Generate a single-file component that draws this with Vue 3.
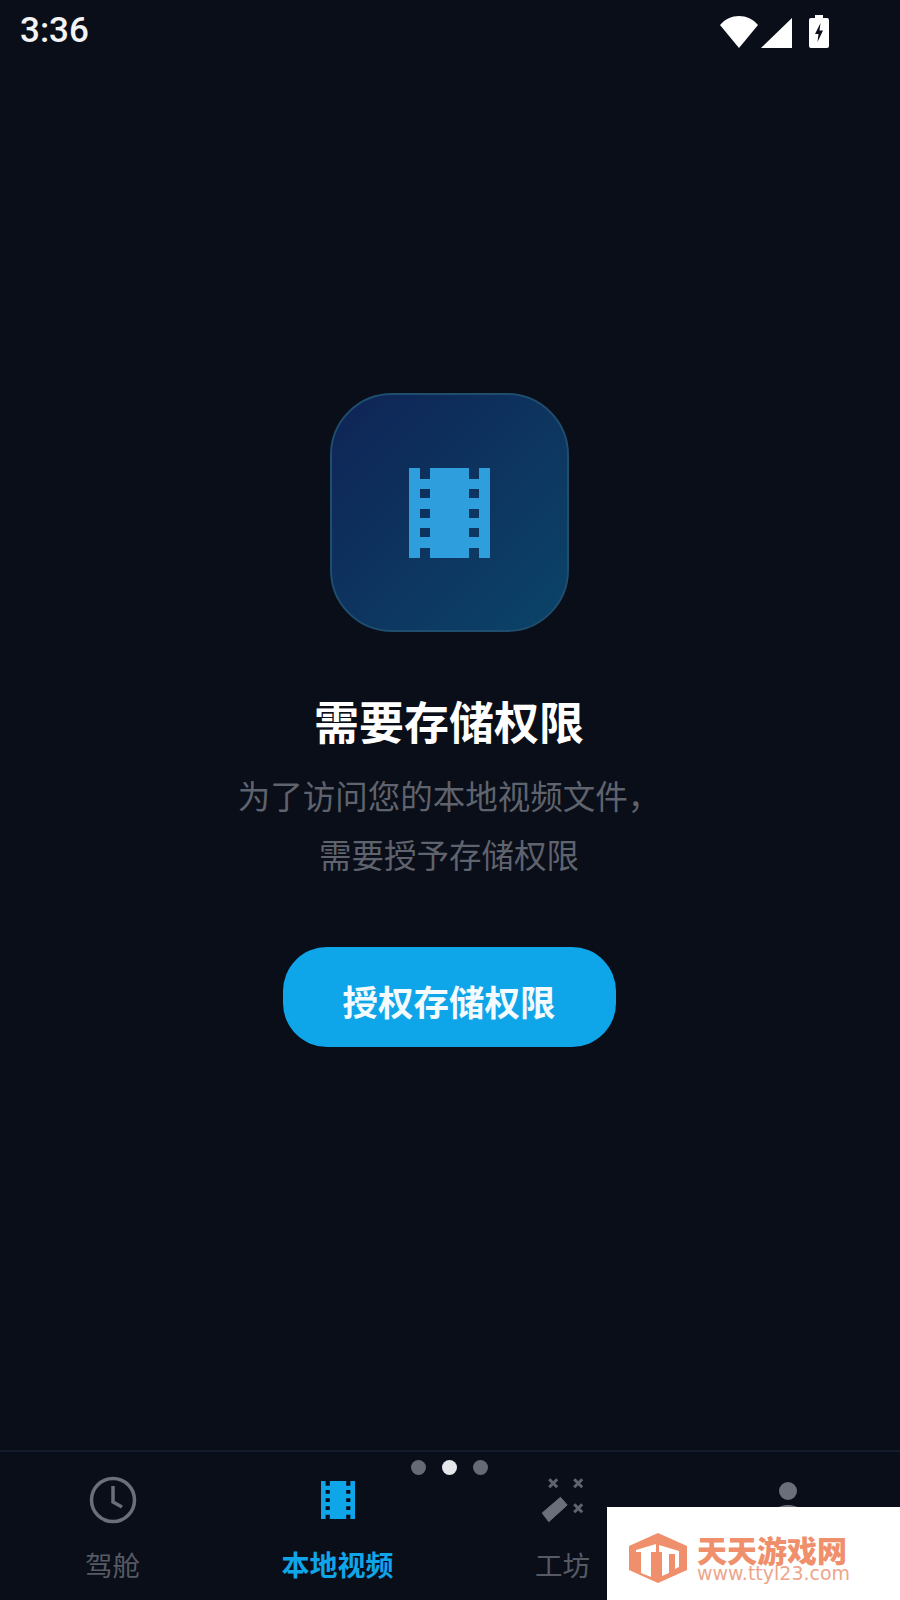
<template>
  <div class="screen">
    <!-- status bar -->
    <div class="status-bar">
      <span class="status-time">3:36</span>
      <div class="status-icons">
        <svg width="38" height="32" viewBox="0 0 38 32"><path d="M0 9C5 3 12 0 19 0s14 3 19 9L19 32Z" fill="#fff" /></svg>
        <svg width="31" height="30" viewBox="0 0 31 30"><path d="M31 0V30H0Z" fill="#fff" /></svg>
        <svg width="20" height="33" viewBox="0 0 20 33"><path fill-rule="evenodd" d="M6 0H14V3H18Q20 3 20 5V31Q20 33 18 33H2Q0 33 0 31V5Q0 3 2 3H6ZM11.5 8L6 19H9.5L8.5 27L14 15.5H10.500Z" fill="#fff" /></svg>
      </div>
    </div>

    <!-- permission prompt -->
    <div class="prompt">
      <div class="prompt-tile">
        <svg width="81" height="90" viewBox="0 0 81 90"><path :d="filmPath" fill-rule="evenodd" fill="#2e9fdc" /></svg>
      </div>
      <div class="prompt-title">需要存储权限</div>
      <div class="prompt-desc">为了访问您的本地视频文件，<br />需要授予存储权限</div>
      <button class="prompt-btn">授权存储权限</button>
    </div>

    <!-- bottom tabs -->
    <div class="tab-bar">
      <div class="page-dots">
        <span class="dot"></span>
        <span class="dot active"></span>
        <span class="dot"></span>
      </div>
      <div class="tab">
        <div class="tab-icon">
          <svg width="48" height="48" viewBox="0 0 48 48" fill="none" stroke="#6b6f7a" stroke-width="3.500">
            <circle cx="24" cy="24" r="21.500" />
            <path d="M24 10V26L33 31" />
          </svg>
        </div>
        <span>驾舱</span>
      </div>
      <div class="tab active">
        <div class="tab-icon">
          <svg width="34" height="38" viewBox="0 0 81 90"><path :d="filmPath" fill-rule="evenodd" fill="#0ea5e9" /></svg>
        </div>
        <span>本地视频</span>
      </div>
      <div class="tab">
        <div class="tab-icon">
          <svg width="48" height="48" viewBox="0 0 48 48" fill="#6b6f7a">
            <path d="M3.200 37L21.500 21.300L28.200 29L9.800 45.700Z" stroke="#6b6f7a" stroke-width="1" stroke-linejoin="round" />
            <path d="M10.200 3.300L18.200 11.300M18.200 3.300L10.200 11.300M35.200 3.300L43.200 11.300M43.200 3.300L35.200 11.300M35.200 28.300L43.200 36.300M43.200 28.300L35.200 36.300" fill="none" stroke="#5f636d" stroke-width="3" />
          </svg>
        </div>
        <span>工坊</span>
      </div>
      <div class="tab">
        <div class="tab-icon">
          <svg width="44" height="50" viewBox="0 0 44 50" fill="#6b6f7a">
            <circle cx="22" cy="16" r="9" />
            <path d="M2 48C2 36 12 30 22 30s20 6 20 18Z" />
          </svg>
        </div>
      </div>
    </div>

    <!-- site watermark -->
    <div class="watermark">
      <svg width="58" height="50" viewBox="0 0 58 50">
        <path d="M29 0L58 13V37L29 50L0 37V13Z" fill="#ef8f6c" />
        <path d="M7 17L27 11V19H22V44L12 40V19H7ZM30 12L50 18V34L46 36V21H40V40L33 43V19H30Z" fill="#fff" />
      </svg>
      <div class="watermark-text">
        <div class="watermark-name">天天游戏网</div>
        <div class="watermark-url">www.ttyl23.com</div>
      </div>
    </div>
  </div>
</template>

<script setup>
const filmPath =
  'M0 0H11V11H21V0H60V11H70V0H81V90H70V80H60V90H21V80H11V90H0Z' +
  'M11 21H21V30H11ZM11 41H21V50H11ZM11 60H21V69H11Z' +
  'M60 21H70V30H60ZM60 41H70V50H60ZM60 60H70V69H60Z'
</script>

<style>
html,
body {
  background: #0a0e18;
}
</style>

<style scoped>
.screen {
  position: relative;
  width: 900px;
  height: 1600px;
  overflow: hidden;
  display: flex;
  flex-direction: column;
  background: #0a0e18;
  font-family: "Noto Sans CJK SC", "Noto Sans", sans-serif;
}
.status-bar {
  height: 62px;
  flex: none;
  display: flex;
  justify-content: space-between;
  align-items: flex-start;
  padding: 9px 71px 0 20px;
  box-sizing: border-box;
}
.status-time {
  font-family: Roboto, sans-serif;
  font-size: 35px;
  font-weight: 500;
  line-height: 44px;
  color: #f2f3f5;
}
.status-icons {
  display: flex;
  align-items: flex-end;
  gap: 3px;
  height: 36px;
  padding-top: 3px;
  box-sizing: content-box;
}
.status-icons svg:last-child {
  margin-left: 14px;
}
.prompt {
  flex: 1;
  display: flex;
  flex-direction: column;
  align-items: center;
  padding: 331px 2px 0 0;
}
.prompt-tile {
  width: 239px;
  height: 239px;
  box-sizing: border-box;
  border-radius: 62px;
  border: 2px solid #1f4d6e;
  background: linear-gradient(135deg, #0f2456, #0b4468);
  display: flex;
  align-items: center;
  justify-content: center;
}
.prompt-title {
  margin-top: 61px;
  font-size: 45px;
  line-height: 56px;
  font-weight: 700;
  color: #fff;
}
.prompt-desc {
  margin-top: 16px;
  font-size: 32.500px;
  line-height: 59px;
  color: #5f636e;
  text-align: center;
}
.prompt-btn {
  margin-top: 64px;
  width: 333px;
  height: 100px;
  border: none;
  border-radius: 44px;
  background: #0ea5e9;
  color: #f4fbff;
  font-family: inherit;
  font-size: 35.500px;
  font-weight: 700;
  padding: 6px 0 0;
}
.tab-bar {
  position: relative;
  height: 150px;
  flex: none;
  box-sizing: border-box;
  border-top: 2px solid #141b2b;
  display: grid;
  grid-template-columns: repeat(4, 225px);
}
.page-dots {
  position: absolute;
  top: 8px;
  left: 411px;
  display: flex;
  gap: 16px;
}
.dot {
  width: 15px;
  height: 15px;
  border-radius: 50%;
  background: #666a75;
}
.dot.active {
  background: #e5e7eb;
}
.tab {
  display: flex;
  flex-direction: column;
  align-items: center;
  padding-top: 18px;
  font-size: 27.500px;
  line-height: 40px;
  color: #565a64;
}
.tab.active {
  color: #0ea5e9;
  font-size: 28px;
  font-weight: 700;
}
.tab-icon {
  height: 60px;
  margin-bottom: 14px;
  display: flex;
  align-items: center;
  justify-content: center;
}
.watermark {
  position: absolute;
  right: 0;
  bottom: 0;
  width: 293px;
  height: 93px;
  box-sizing: border-box;
  padding: 26px 0 0 22px;
  background: #fff;
  display: flex;
  gap: 10px;
}
.watermark-text {
  margin-top: 1px;
  color: #ef8f6c;
}
.watermark-name {
  font-size: 30px;
  line-height: 30px;
  font-weight: 900;
}
.watermark-url {
  font-family: "DejaVu Sans", sans-serif;
  font-size: 19px;
  line-height: 18px;
  color: #eda68c;
}
</style>
